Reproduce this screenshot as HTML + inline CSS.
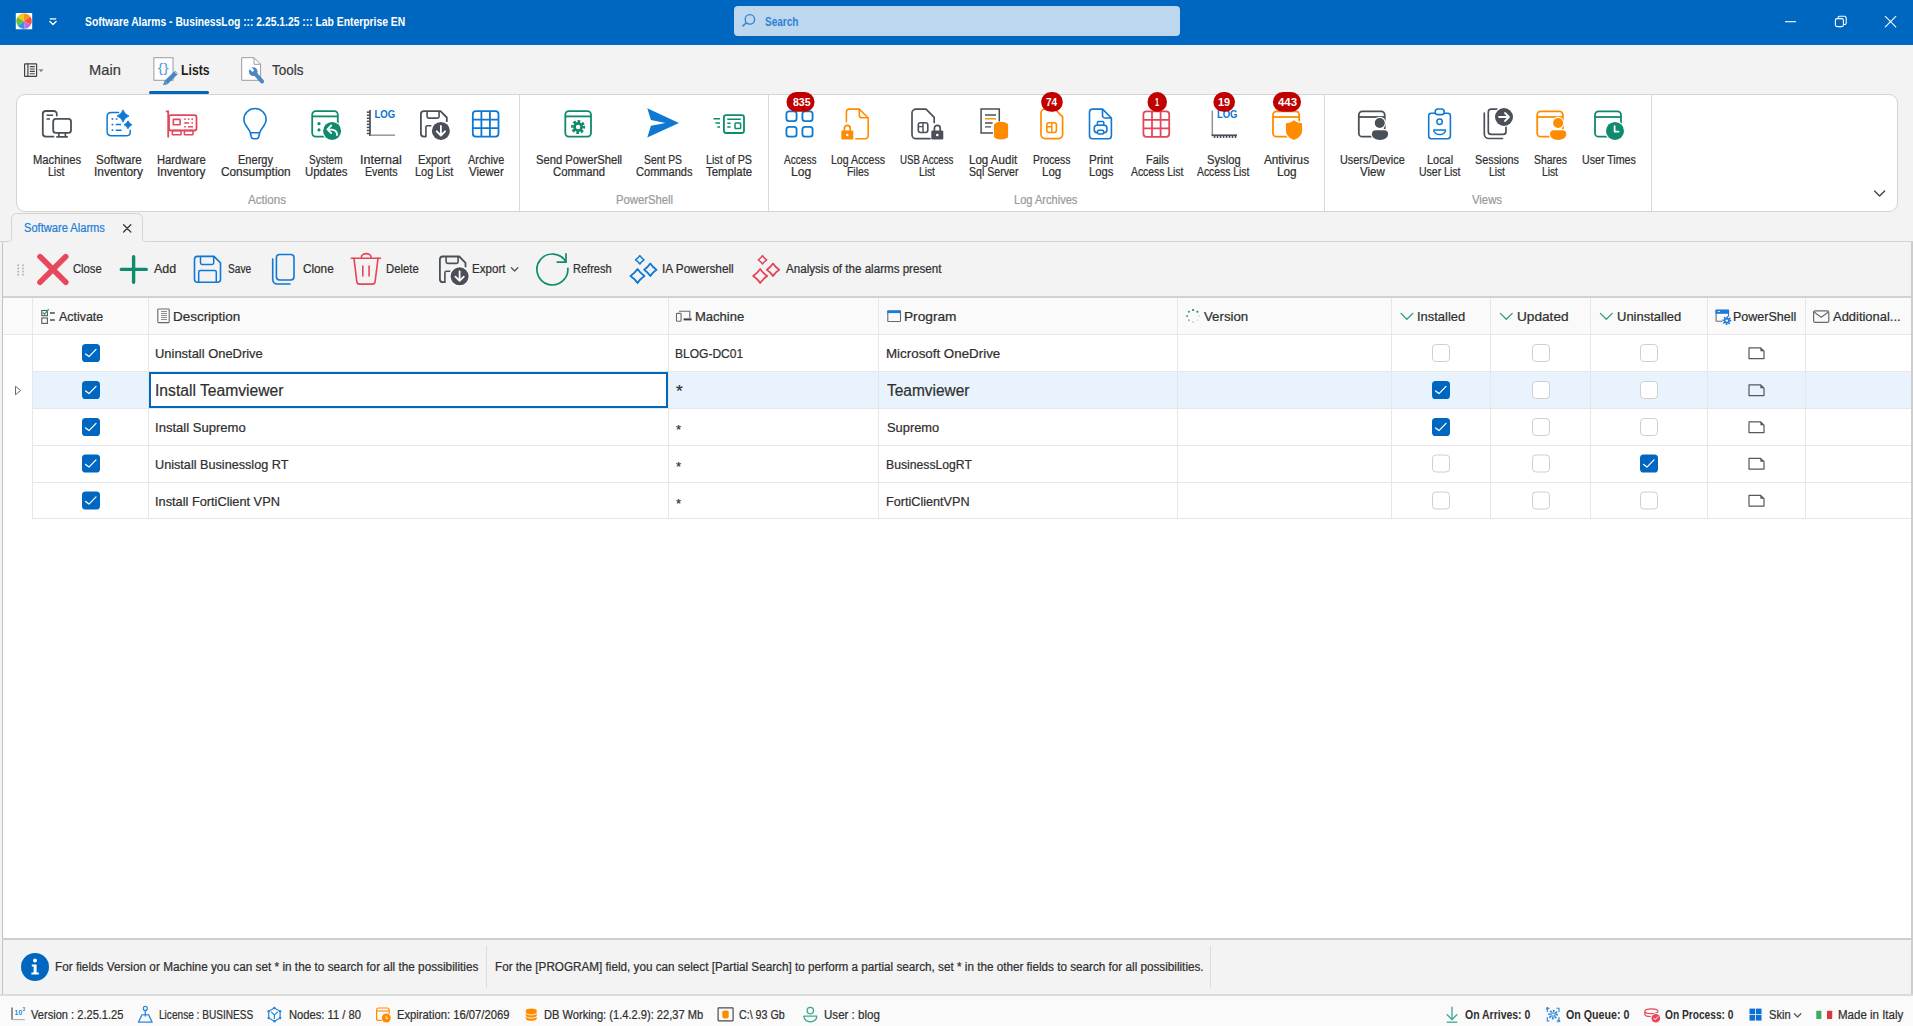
<!DOCTYPE html>
<html><head><meta charset="utf-8"><title>Software Alarms - BusinessLog</title>
<style>
html,body{margin:0;padding:0;background:#f3f3f3;overflow:hidden;font-family:"Liberation Sans",sans-serif}
body{width:1913px;height:1026px;font-family:"Liberation Sans",sans-serif}
#app{position:relative;width:1913px;height:1026px;overflow:hidden;background:#f3f3f3}
#app>*{position:absolute}
.t{-webkit-text-stroke:0.22px currentColor;white-space:pre;transform-origin:0 50%;display:block}
.b{box-sizing:border-box}
svg{overflow:visible}

</style></head>
<body>
<div id="app">
<!-- title bar -->
<div style="left:0;top:0;width:1913px;height:45px;background:#0067c0"></div>
<div style="left:734px;top:6px;width:446px;height:30px;background:#bdd7ee;border-radius:4px"></div>
<!-- tab underline -->
<div style="left:149px;top:91px;width:60px;height:3px;background:#0067c0;border-radius:2px"></div>
<!-- ribbon -->
<div class="b" style="left:16px;top:94px;width:1882px;height:118px;background:#fff;border:1px solid #d4d4d4;border-radius:9px"></div>
<div style="left:519px;top:95px;width:1px;height:116px;background:#d9d9d9"></div>
<div style="left:768px;top:95px;width:1px;height:116px;background:#d9d9d9"></div>
<div style="left:1324px;top:95px;width:1px;height:116px;background:#d9d9d9"></div>
<div style="left:1651px;top:95px;width:1px;height:116px;background:#d9d9d9"></div>
<!-- document area frame -->
<div style="left:2px;top:242px;width:1px;height:752px;background:#c2c2c2"></div>
<!-- toolbar bottom line -->
<div style="left:3px;top:296px;width:1910px;height:2px;background:#d2d2d2"></div>
<!-- grid -->
<div style="left:3px;top:298px;width:1908px;height:640px;background:#fff"></div>
<div style="left:3px;top:298px;width:1908px;height:36px;background:#fafafa"></div>
<div style="left:33px;top:372px;width:1878px;height:36px;background:#e9f3fd"></div>
<!-- horizontal grid lines -->
<div style="left:3px;top:334px;width:1908px;height:1px;background:#e7e7e7"></div>
<div style="left:33px;top:371px;width:1878px;height:1px;background:#e7e7e7"></div>
<div style="left:33px;top:408px;width:1878px;height:1px;background:#e7e7e7"></div>
<div style="left:33px;top:445px;width:1878px;height:1px;background:#e7e7e7"></div>
<div style="left:33px;top:482px;width:1878px;height:1px;background:#e7e7e7"></div>
<div style="left:33px;top:518px;width:1878px;height:1px;background:#e7e7e7"></div>
<!-- vertical grid lines -->
<div style="left:32px;top:298px;width:1px;height:221px;background:#e7e7e7"></div>
<div style="left:148px;top:298px;width:1px;height:221px;background:#e7e7e7"></div>
<div style="left:668px;top:298px;width:1px;height:221px;background:#e7e7e7"></div>
<div style="left:878px;top:298px;width:1px;height:221px;background:#e7e7e7"></div>
<div style="left:1177px;top:298px;width:1px;height:221px;background:#e7e7e7"></div>
<div style="left:1391px;top:298px;width:1px;height:221px;background:#e7e7e7"></div>
<div style="left:1490px;top:298px;width:1px;height:221px;background:#e7e7e7"></div>
<div style="left:1590px;top:298px;width:1px;height:221px;background:#e7e7e7"></div>
<div style="left:1707px;top:298px;width:1px;height:221px;background:#e7e7e7"></div>
<div style="left:1805px;top:298px;width:1px;height:221px;background:#e7e7e7"></div>
<div style="left:1911px;top:242px;width:2px;height:753px;background:#cdcdcd"></div>
<!-- edit box -->
<div class="b" style="left:149px;top:372px;width:519px;height:36px;background:#fff;border:2px solid #0067c0"></div>
<!-- grid bottom / info panel -->
<div style="left:2px;top:938px;width:1911px;height:2px;background:#cdcdcd"></div>
<div style="left:486px;top:946px;width:1px;height:42px;background:#dcdcdc"></div>
<div style="left:1210px;top:946px;width:1px;height:42px;background:#dcdcdc"></div>
<div style="left:0;top:994px;width:1913px;height:2px;background:#dcdcdc"></div>
<div style="left:0;top:996px;width:1913px;height:30px;background:#fafafa"></div>

<svg style="left:0;top:0" width="1913" height="1026" viewBox="0 0 1913 1026">
<path d="M53.5 136.6H45.8a3 3 0 0 1-3-3V114a3 3 0 0 1 3-3H53.8a3 3 0 0 1 3 3V115.6" fill="none" stroke="#4a5058" stroke-width="1.8" stroke-linecap="round" stroke-linejoin="round"/>
<path d="M46.5 115.2H53.2M46.5 119H50" fill="none" stroke="#4a5058" stroke-width="1.6" />
<rect x="53.2" y="118.9" width="17.8" height="14" rx="2.6" fill="none" stroke="#4a5058" stroke-width="1.8" />
<path d="M58.8 133V136.6M65.4 133V136.6M56.3 136.8H67.8" fill="none" stroke="#4a5058" stroke-width="1.7" />
<path d="M118.5 112.4H111.5q-4.4 0-4.4 4.2V131.6q0 4.2 4.4 4.2H126q4.2 0 4.2-3.6V130.2" fill="none" stroke="#0f78d4" stroke-width="1.5" stroke-linecap="round" stroke-linejoin="round"/>
<path d="M123 109.8Q124.6 114.4 129 116Q124.6 117.6 123 122.2Q121.4 117.6 117 116Q121.4 114.4 123 109.8Z" fill="#0f78d4" stroke="#0f78d4" stroke-width="0.8" stroke-linejoin="round"/>
<path d="M128 120.8Q129.2 123.6 132 124.8Q129.2 126 128 128.8Q126.8 126 124 124.8Q126.8 123.6 128 120.8Z" fill="#0f78d4" stroke="#0f78d4" stroke-width="0.8" stroke-linejoin="round"/>
<rect x="111.6" y="118.2" width="1.7" height="1.6" rx="0" fill="#0f78d4" />
<rect x="111.6" y="123.8" width="1.7" height="1.6" rx="0" fill="#0f78d4" />
<rect x="111.6" y="129.39999999999998" width="1.7" height="1.6" rx="0" fill="#0f78d4" />
<path d="M115.8 124.6H121M115.8 130.2H121.6M115.8 119H117.5" fill="none" stroke="#0f78d4" stroke-width="1.5" />
<path d="M165.8 111.4H168.2V137.5" fill="none" stroke="#e3465a" stroke-width="1.8" />
<rect x="169" y="115.2" width="27.5" height="15.3" rx="2" fill="none" stroke="#e3465a" stroke-width="1.8" />
<rect x="172.4" y="130.5" width="8.6" height="4.2" rx="0.5" fill="none" stroke="#e3465a" stroke-width="1.5" />
<rect x="184.4" y="130.5" width="8.6" height="4.2" rx="0.5" fill="none" stroke="#e3465a" stroke-width="1.5" />
<rect x="173.3" y="119.4" width="6.8" height="5.4" rx="0.5" fill="none" stroke="#e3465a" stroke-width="1.6" />
<rect x="184.2" y="118.4" width="1.6" height="1.5" rx="0" fill="#e3465a" />
<rect x="187.8" y="118.4" width="1.6" height="1.5" rx="0" fill="#e3465a" />
<rect x="191.4" y="118.4" width="1.6" height="1.5" rx="0" fill="#e3465a" />
<path d="M184.2 122.9H189M184.2 126.7H185.8M188 126.7H193" fill="none" stroke="#e3465a" stroke-width="1.5" />
<rect x="191.4" y="122.1" width="1.6" height="1.5" rx="0" fill="#e3465a" />
<path d="M250.3 132.8C249.2 128 243.9 125.6 243.9 119.6A11.1 11.1 0 0 1 266.1 119.6C266.1 125.6 260.8 128 259.7 132.8L258.7 137Q258.2 138.7 256.5 138.7H253.5Q251.8 138.7 251.3 137ZM250.3 132.8H259.7" fill="none" stroke="#0f78d4" stroke-width="1.6" stroke-linecap="round" stroke-linejoin="round"/>
<rect x="312.2" y="111.2" width="25.600000000000023" height="25.39999999999999" rx="3.5" fill="none" stroke="#0f8a6c" stroke-width="1.8" />
<path d="M312.2 116.4H337.8" fill="none" stroke="#0f8a6c" stroke-width="1.8" />
<circle cx="319" cy="123.7" r="1.6" fill="#0f8a6c" />
<circle cx="319" cy="129.9" r="1.6" fill="#0f8a6c" />
<circle cx="332.1" cy="130.9" r="9" fill="#0f8a6c" stroke="#ffffff" stroke-width="2.4" paint-order="stroke"/>
<path d="M337 135C337.2 130.6 334.2 129.3 327.6 129.3M331.2 125.5L327.4 129.3L331.2 133.1" fill="none" stroke="#ffffff" stroke-width="1.8" stroke-linecap="round" stroke-linejoin="round"/>
<path d="M370 110V136" fill="none" stroke="#4a5058" stroke-width="1.7" />
<rect x="366.8" y="111.4" width="3.2" height="1.5" rx="0" fill="#4a5058" />
<rect x="366.8" y="114.45" width="3.2" height="1.5" rx="0" fill="#4a5058" />
<rect x="366.8" y="117.5" width="3.2" height="1.5" rx="0" fill="#4a5058" />
<rect x="366.8" y="120.55000000000001" width="3.2" height="1.5" rx="0" fill="#4a5058" />
<rect x="366.8" y="123.60000000000001" width="3.2" height="1.5" rx="0" fill="#4a5058" />
<rect x="366.8" y="126.65" width="3.2" height="1.5" rx="0" fill="#4a5058" />
<rect x="366.8" y="129.7" width="3.2" height="1.5" rx="0" fill="#4a5058" />
<rect x="366.8" y="132.75" width="3.2" height="1.5" rx="0" fill="#4a5058" />
<path d="M370.8 135.2H395" fill="none" stroke="#9a9ea3" stroke-width="1.6" />
<text x="374.5" y="117.6" font-family="Liberation Sans, sans-serif" font-size="10.6" font-weight="700" fill="#0c74d2" textLength="20.8" lengthAdjust="spacingAndGlyphs" >LOG</text>
<path d="M425.7 136.6H423.9a3 3 0 0 1-3-3V114.2a3 3 0 0 1 3-3H440.5L446.8 117.5V121.2" fill="none" stroke="#4a5058" stroke-width="1.8" stroke-linecap="round" stroke-linejoin="round"/>
<path d="M427.09999999999997 111.4V116.5a1.6 1.6 0 0 0 1.6 1.6H437.5a1.6 1.6 0 0 0 1.6-1.6V111.4" fill="none" stroke="#4a5058" stroke-width="1.6" />
<path d="M425.9 136.6V127.3a1.6 1.6 0 0 1 1.6-1.6H431.4" fill="none" stroke="#4a5058" stroke-width="1.6" />
<circle cx="440.9" cy="130.9" r="9" fill="#4a5058" stroke="#ffffff" stroke-width="2.4" paint-order="stroke"/>
<path d="M440.9 125.9V135.3M436.7 131.3L440.9 135.5L445.09999999999997 131.3" fill="none" stroke="#ffffff" stroke-width="1.8" stroke-linecap="round" stroke-linejoin="round"/>
<rect x="472.8" y="111.2" width="25.69999999999999" height="25.39999999999999" rx="3" fill="none" stroke="#0f78d4" stroke-width="1.8" />
<path d="M481.4 111.2V136.6M489.9 111.2V136.6M472.8 119.7H498.5M472.8 128.1H498.5" fill="none" stroke="#0f78d4" stroke-width="1.8" />
<rect x="565.3" y="111.2" width="25.700000000000045" height="25.39999999999999" rx="3.5" fill="none" stroke="#0f8a6c" stroke-width="1.8" />
<path d="M565.3 116.4H591" fill="none" stroke="#0f8a6c" stroke-width="1.8" />
<circle cx="578.1" cy="127" r="5.7" fill="none" stroke="#0f8a6c" stroke-width="2.8" stroke-dasharray="2.57 1.90" transform="rotate(-11 578.1 127)"/>
<circle cx="578.1" cy="127" r="4.9" fill="#0f8a6c" />
<circle cx="578.1" cy="127" r="2.2" fill="#ffffff" />
<path d="M647.3 108.2L679 122.9L647.3 137.6L650.9 125.7L665.5 122.9L650.9 120.1Z" fill="#0f78d4" />
<rect x="723.9" y="115.2" width="20.1" height="17.8" rx="2.2" fill="none" stroke="#0f8a6c" stroke-width="1.8" />
<path d="M713.4 118.8H720M715.4 122.9H720M717.3 127H720" fill="none" stroke="#0f8a6c" stroke-width="1.5" />
<path d="M727.3 119.3H740.7M727.3 123.2H730.6M727.3 127H730.6" fill="none" stroke="#0f8a6c" stroke-width="1.5" />
<rect x="735" y="122.9" width="5.6" height="5.6" rx="0.8" fill="none" stroke="#0f8a6c" stroke-width="1.5" />
<rect x="786.4" y="111.3" width="10.2" height="9.8" rx="2.6" fill="none" stroke="#0f78d4" stroke-width="1.8" />
<rect x="802.4" y="111.3" width="10.2" height="9.8" rx="2.6" fill="none" stroke="#0f78d4" stroke-width="1.8" />
<rect x="786.4" y="126.9" width="10.2" height="9.8" rx="2.6" fill="none" stroke="#0f78d4" stroke-width="1.8" />
<rect x="802.4" y="126.9" width="10.2" height="9.8" rx="2.6" fill="none" stroke="#0f78d4" stroke-width="1.8" />
<path d="M846.4 121.6V112.1a3 3 0 0 1 3-3H859.3L868.2 118V135.7a3 3 0 0 1-3 3H855.8" fill="none" stroke="#ff8c00" stroke-width="1.6" stroke-linecap="round" stroke-linejoin="round"/>
<path d="M859.3 109.3V115.2a2.6 2.6 0 0 0 2.6 2.6H868" fill="none" stroke="#ff8c00" stroke-width="1.6" />
<rect x="841.3" y="130.5" width="12" height="9" rx="1.3" fill="#ff8c00" />
<path d="M844.4 131V128.2a2.9 2.9 0 0 1 5.8 0V131" fill="none" stroke="#ff8c00" stroke-width="1.7" />
<circle cx="847.3" cy="135" r="1.35" fill="#ffffff" />
<path d="M930 138.7H916a4 4 0 0 1-4-4V113.1a4 4 0 0 1 4-4H926L934.2 117.4V122.4" fill="none" stroke="#4a5058" stroke-width="1.7" stroke-linecap="round" stroke-linejoin="round"/>
<rect x="918.3" y="122.8" width="9.5" height="9.7" rx="2.2" fill="none" stroke="#4a5058" stroke-width="1.6" />
<path d="M918.3 126.6H923M923 122.8V132.5" fill="none" stroke="#4a5058" stroke-width="1.4" />
<rect x="931.3" y="130.5" width="12" height="9" rx="1.3" fill="#4a5058" />
<path d="M934.4 131V128.2a2.9 2.9 0 0 1 5.8 0V131" fill="none" stroke="#4a5058" stroke-width="1.7" />
<circle cx="937.3" cy="135" r="1.35" fill="#ffffff" />
<path d="M993 133H981.1V109H999.3V121.4" fill="none" stroke="#4a5058" stroke-width="1.5" />
<path d="M985 115H996M985 123H992.6M985 126.8H991" fill="none" stroke="#4a5058" stroke-width="1.3" />
<path d="M985 118.8H996" fill="none" stroke="#ff8c00" stroke-width="1.4" />
<path d="M994 124.8a7.05 3 0 0 1 14.1 0V136.5a7.05 3 0 0 1-14.1 0Z" fill="#ff8c00" />
<path d="M1045 109.1H1055L1062.6 116.8V134.6a4 4 0 0 1-4 4H1045a4 4 0 0 1-4-4V113.1a4 4 0 0 1 4-4Z" fill="none" stroke="#ff8c00" stroke-width="1.7" stroke-linecap="round" stroke-linejoin="round"/>
<rect x="1046.8" y="122.8" width="9.6" height="9.7" rx="2.2" fill="none" stroke="#ff8c00" stroke-width="1.6" />
<path d="M1046.8 126.8H1051.8M1051.8 122.8V132.5" fill="none" stroke="#ff8c00" stroke-width="1.4" />
<path d="M1092.5 109.1H1102.5L1111.4 118V135.7a3 3 0 0 1-3 3H1092.5a3 3 0 0 1-3-3V112.1a3 3 0 0 1 3-3Z" fill="none" stroke="#0f78d4" stroke-width="1.6" stroke-linecap="round" stroke-linejoin="round"/>
<path d="M1102.5 109.3V115.4a2.6 2.6 0 0 0 2.6 2.6H1111.2" fill="none" stroke="#0f78d4" stroke-width="1.6" />
<rect x="1097.4" y="121.6" width="6.4" height="4" rx="1" fill="none" stroke="#0f78d4" stroke-width="1.5" />
<rect x="1094.3" y="125.2" width="12.6" height="7.4" rx="2.6" fill="#ffffff" stroke="#0f78d4" stroke-width="1.6" />
<rect x="1097.6" y="130.2" width="6" height="3.8" rx="1" fill="#ffffff" stroke="#0f78d4" stroke-width="1.5" />
<rect x="1143.4" y="111.4" width="25.799999999999955" height="25.400000000000006" rx="3" fill="none" stroke="#e3465a" stroke-width="1.8" />
<path d="M1152.0 111.4V136.8M1160.6 111.4V136.8M1143.4 119.9H1169.2M1143.4 128.3H1169.2" fill="none" stroke="#e3465a" stroke-width="1.8" />
<path d="M1212.3 110.5V135" fill="none" stroke="#8f9399" stroke-width="1.5" />
<path d="M1211.5 135.3H1237" fill="none" stroke="#4a5058" stroke-width="1.8" />
<rect x="1213.8" y="136" width="1.5" height="2" rx="0" fill="#4a5058" />
<rect x="1216.8" y="136" width="1.5" height="2" rx="0" fill="#4a5058" />
<rect x="1219.8" y="136" width="1.5" height="2" rx="0" fill="#4a5058" />
<rect x="1222.8" y="136" width="1.5" height="2" rx="0" fill="#4a5058" />
<rect x="1225.8" y="136" width="1.5" height="2" rx="0" fill="#4a5058" />
<rect x="1228.8" y="136" width="1.5" height="2" rx="0" fill="#4a5058" />
<rect x="1231.8" y="136" width="1.5" height="2" rx="0" fill="#4a5058" />
<rect x="1234.8" y="136" width="1.5" height="2" rx="0" fill="#4a5058" />
<text x="1216.9" y="117.8" font-family="Liberation Sans, sans-serif" font-size="10.6" font-weight="700" fill="#0c74d2" textLength="20.6" lengthAdjust="spacingAndGlyphs" >LOG</text>
<rect x="1273" y="111.4" width="26.200000000000045" height="25.299999999999983" rx="3.5" fill="none" stroke="#ff8c00" stroke-width="1.8" />
<path d="M1273 117H1299.2" fill="none" stroke="#ff8c00" stroke-width="1.8" />
<path d="M1294 120.3C1296.5 122.3 1299 123 1302.1 123.2V130.5C1302.1 135.5 1298 138.5 1294 139.9C1290 138.5 1285.9 135.5 1285.9 130.5V123.2C1289 123 1291.5 122.3 1294 120.3Z" fill="#ff8c00" stroke="#ffffff" stroke-width="2.4" paint-order="stroke"/>
<rect x="1358.8" y="111.4" width="25.90000000000009" height="25.299999999999983" rx="3.5" fill="none" stroke="#4a5058" stroke-width="1.8" />
<path d="M1358.8 117H1384.7" fill="none" stroke="#4a5058" stroke-width="1.8" />
<circle cx="1379.75" cy="123" r="5" fill="#4a5058" stroke="#ffffff" stroke-width="2.4" paint-order="stroke"/>
<path d="M1371.9 134.10000000000002a3.8 3.8 0 0 1 3.8 -3.8H1384.3a3.8 3.8 0 0 1 3.8 3.8C1388.1 137.9 1384.5 139.9 1380.0 139.9C1375.5 139.9 1371.9 137.9 1371.9 134.10000000000002Z" fill="#4a5058" stroke="#ffffff" stroke-width="2.4" paint-order="stroke"/>
<rect x="1428.7" y="113.2" width="21.7" height="25.5" rx="2.6" fill="none" stroke="#0f78d4" stroke-width="1.6" />
<rect x="1435.2" y="109" width="9" height="5.6" rx="2.7" fill="#ffffff" stroke="#0f78d4" stroke-width="1.6" />
<circle cx="1439.6" cy="121.8" r="2.7" fill="none" stroke="#0f78d4" stroke-width="1.5" />
<path d="M1433.8 130H1445.6a5.9 4.6 0 0 1-11.8 0Z" fill="none" stroke="#0f78d4" stroke-width="1.5" stroke-linecap="round" stroke-linejoin="round"/>
<path d="M1497 109.1H1491.3a3 3 0 0 0-3 3V131.4a3 3 0 0 0 3 3H1503a3 3 0 0 0 3-3V126" fill="none" stroke="#4a5058" stroke-width="1.7" stroke-linecap="round" stroke-linejoin="round"/>
<path d="M1484.3 113V134a4.5 4.5 0 0 0 4.5 4.5H1502.5" fill="none" stroke="#4a5058" stroke-width="1.7" stroke-linecap="round" stroke-linejoin="round"/>
<circle cx="1504" cy="117" r="9" fill="#4a5058" stroke="#ffffff" stroke-width="2.4" paint-order="stroke"/>
<path d="M1499 117H1508.6M1505 113L1509 117L1505 121" fill="none" stroke="#ffffff" stroke-width="1.8" stroke-linecap="round" stroke-linejoin="round"/>
<rect x="1537.2" y="111.4" width="25.700000000000045" height="25.299999999999983" rx="3.5" fill="none" stroke="#ff8c00" stroke-width="1.8" />
<path d="M1537.2 117H1562.9" fill="none" stroke="#ff8c00" stroke-width="1.8" />
<circle cx="1558.1" cy="123" r="5" fill="#ff8c00" stroke="#ffffff" stroke-width="2.4" paint-order="stroke"/>
<path d="M1550 134.10000000000002a3.8 3.8 0 0 1 3.8 -3.8H1562.5a3.8 3.8 0 0 1 3.8 3.8C1566.3 137.9 1562.7 139.9 1558.15 139.9C1553.6 139.9 1550 137.9 1550 134.10000000000002Z" fill="#ff8c00" stroke="#ffffff" stroke-width="2.4" paint-order="stroke"/>
<rect x="1595" y="111.4" width="26" height="25.299999999999983" rx="3.5" fill="none" stroke="#0f8a6c" stroke-width="1.8" />
<path d="M1595 117H1621" fill="none" stroke="#0f8a6c" stroke-width="1.8" />
<circle cx="1615" cy="130.9" r="9" fill="#0f8a6c" stroke="#ffffff" stroke-width="2.4" paint-order="stroke"/>
<path d="M1614.6 126.2V131.6H1618.6" fill="none" stroke="#ffffff" stroke-width="1.8" stroke-linecap="round" stroke-linejoin="round"/>
<rect x="786.5" y="92" width="28.0" height="19.8" rx="9.9" fill="#c00000" />
<rect x="1041.1" y="92" width="21.700000000000045" height="19.8" rx="9.9" fill="#c00000" />
<rect x="1147.5" y="92" width="19.5" height="19.8" rx="9.9" fill="#c00000" />
<rect x="1213.4" y="92" width="21.59999999999991" height="19.8" rx="9.9" fill="#c00000" />
<rect x="1272.9" y="92" width="28.09999999999991" height="19.8" rx="9.9" fill="#c00000" />
<path d="M1874.6 191L1879.6 196L1884.6 191" fill="none" stroke="#444" stroke-width="1.4" stroke-linecap="round" stroke-linejoin="round"/>
<rect x="15.8" y="13.1" width="16.4" height="16.2" rx="0.5" fill="#ffffff" />
<path d="M24 21.2L17.33 17.35A7.7 7.7 0 0 1 23.33 13.53Z" fill="#f6c915" />
<path d="M24 21.2L23.33 13.53A7.7 7.7 0 0 1 30.31 16.78Z" fill="#ff9518" />
<path d="M24 21.2L30.31 16.78A7.7 7.7 0 0 1 30.98 24.45Z" fill="#fb4b3e" />
<path d="M24 21.2L30.98 24.45A7.7 7.7 0 0 1 24.67 28.87Z" fill="#c56bd6" />
<path d="M24 21.2L24.67 28.87A7.7 7.7 0 0 1 17.69 25.62Z" fill="#3d8fe8" />
<path d="M24 21.2L17.69 25.62A7.7 7.7 0 0 1 17.33 17.35Z" fill="#63c132" />
<path d="M49.8 18.9H56.2" fill="none" stroke="#ffffff" stroke-width="1.3" />
<path d="M49.9 21.6L53 24.6L56.1 21.6" fill="none" stroke="#ffffff" stroke-width="1.4" stroke-linecap="round" stroke-linejoin="round"/>
<circle cx="749.9" cy="19.4" r="4.7" fill="none" stroke="#2f82d4" stroke-width="1.3" />
<path d="M746.5 22.8L742.9 25.9" fill="none" stroke="#2f82d4" stroke-width="1.5" stroke-linecap="round" stroke-linejoin="round"/>
<path d="M1785 21.7H1796" fill="none" stroke="#ffffff" stroke-width="1.1" />
<rect x="1835.4" y="18.6" width="8" height="8" rx="1.6" fill="none" stroke="#ffffff" stroke-width="1.1" />
<path d="M1838 18.4V17.9a1.6 1.6 0 0 1 1.6-1.6H1844.6a1.6 1.6 0 0 1 1.6 1.6V22.9a1.6 1.6 0 0 1-1.6 1.6H1843.6" fill="none" stroke="#ffffff" stroke-width="1.1" />
<path d="M1885.3 16.4L1895.8 26.9M1895.8 16.4L1885.3 26.9" fill="none" stroke="#ffffff" stroke-width="1.1" stroke-linecap="round" stroke-linejoin="round"/>
<rect x="24.6" y="63.8" width="12" height="12.6" rx="0.5" fill="none" stroke="#444" stroke-width="1.2" />
<path d="M27.9 63.8V76.4" fill="none" stroke="#444" stroke-width="1.2" />
<path d="M29.8 66.6H34.8M29.8 69H34.8M29.8 71.4H34.8M29.8 73.8H34.8" fill="none" stroke="#444" stroke-width="1.1" />
<path d="M38.4 69.2H43.6L41 72.2Z" fill="#8a8a8a" />
<rect x="153.9" y="57.7" width="19.1" height="22.6" rx="0" fill="#ffffff" stroke="#9c9c9c" stroke-width="1" />
<text x="157.8" y="71.8" font-family="Liberation Sans, sans-serif" font-size="13.5" font-weight="400" fill="#5b9bd5" textLength="11" lengthAdjust="spacingAndGlyphs" >{}</text>
<path d="M176.4 72.4L166 82.6" fill="none" stroke="#4a86c5" stroke-width="4.4" />
<path d="M163.2 85.2L164.2 81L167.4 84.2Z" fill="#4a86c5" />
<path d="M174.3 71.4L177.4 74.5" fill="none" stroke="#dfe9f5" stroke-width="0.8" />
<path d="M241.7 57.7H254L260.6 64.3V80.3H241.7Z" fill="#ffffff" stroke="#9c9c9c" stroke-width="1" />
<path d="M254 57.7V64.3H260.6" fill="none" stroke="#9c9c9c" stroke-width="1" />
<path d="M255 73.6L262 81.4" fill="none" stroke="#4a86c5" stroke-width="4" stroke-linecap="round" stroke-linejoin="round"/>
<circle cx="253.2" cy="71.6" r="4.3" fill="#4a86c5" />
<path d="M253.4 71.2L249.6 67.4" fill="none" stroke="#ffffff" stroke-width="2.6" />
<path d="M0 241.5H8.5Q11.5 241.5 11.5 238.5V219.5Q11.5 213.5 17.5 213.5H136.5Q142.5 213.5 142.5 219.5V238.5Q142.5 241.5 145.5 241.5H1913" fill="none" stroke="#d4d4d4" stroke-width="1" />
<path d="M123.6 224.8L130.8 232M130.8 224.8L123.6 232" fill="none" stroke="#3a3a3a" stroke-width="1.3" stroke-linecap="round" stroke-linejoin="round"/>
<rect x="17.4" y="264.5" width="1.7" height="1.7" rx="0" fill="#b4b4b4" />
<rect x="17.4" y="267.59999999999997" width="1.7" height="1.7" rx="0" fill="#b4b4b4" />
<rect x="17.4" y="270.7" width="1.7" height="1.7" rx="0" fill="#b4b4b4" />
<rect x="17.4" y="273.8" width="1.7" height="1.7" rx="0" fill="#b4b4b4" />
<rect x="22.099999999999998" y="264.5" width="1.7" height="1.7" rx="0" fill="#b4b4b4" />
<rect x="22.099999999999998" y="267.59999999999997" width="1.7" height="1.7" rx="0" fill="#b4b4b4" />
<rect x="22.099999999999998" y="270.7" width="1.7" height="1.7" rx="0" fill="#b4b4b4" />
<rect x="22.099999999999998" y="273.8" width="1.7" height="1.7" rx="0" fill="#b4b4b4" />
<path d="M40 256.6L65.8 282.2M65.8 256.6L40 282.2" fill="none" stroke="#e8485c" stroke-width="5.6" stroke-linecap="round" stroke-linejoin="round"/>
<path d="M121.3 269.4H146.3M133.6 256.7V282.2" fill="none" stroke="#0f8a6c" stroke-width="3.4" stroke-linecap="round" stroke-linejoin="round"/>
<path d="M197.5 256.4H214.0L220.5 262.9V279.3a3 3 0 0 1-3 3H197.5a3 3 0 0 1-3-3V259.4a3 3 0 0 1 3-3Z" fill="none" stroke="#0f78d4" stroke-width="1.6" stroke-linecap="round" stroke-linejoin="round"/>
<path d="M200.5 256.4V262.79999999999995a1.6 1.6 0 0 0 1.6 1.6H212.1a1.6 1.6 0 0 0 1.6-1.6V256.4" fill="none" stroke="#0f78d4" stroke-width="1.5" />
<path d="M198.7 282.3V272.1a1.6 1.6 0 0 1 1.6-1.6H214.7a1.6 1.6 0 0 1 1.6 1.6V282.3" fill="none" stroke="#0f78d4" stroke-width="1.5" />
<rect x="276.4" y="254.5" width="17.6" height="25.5" rx="3.2" fill="none" stroke="#0f78d4" stroke-width="1.6" />
<path d="M272.7 259V279.6a4.4 4.4 0 0 0 4.4 4.4H290" fill="none" stroke="#0f78d4" stroke-width="1.6" stroke-linecap="round" stroke-linejoin="round"/>
<path d="M351.3 258.2H380.6" fill="none" stroke="#e3465a" stroke-width="1.6" stroke-linecap="round" stroke-linejoin="round"/>
<path d="M361.4 258V257a4.8 3.4 0 0 1 9.6 0V258" fill="none" stroke="#e3465a" stroke-width="1.6" />
<path d="M354 258.4L356.8 281.6a2.8 2.8 0 0 0 2.8 2.5H372.3a2.8 2.8 0 0 0 2.8-2.5L378 258.4" fill="none" stroke="#e3465a" stroke-width="1.6" stroke-linecap="round" stroke-linejoin="round"/>
<path d="M362.8 265.4V276.6M369.1 265.4V276.6" fill="none" stroke="#e3465a" stroke-width="1.6" />
<path d="M444.7 282.2H442.9a3 3 0 0 1-3-3V259.5a3 3 0 0 1 3-3H459.2L465.5 262.8V266.5" fill="none" stroke="#4a5058" stroke-width="1.8" stroke-linecap="round" stroke-linejoin="round"/>
<path d="M446.09999999999997 256.7V261.8a1.6 1.6 0 0 0 1.6 1.6H456.5a1.6 1.6 0 0 0 1.6-1.6V256.7" fill="none" stroke="#4a5058" stroke-width="1.6" />
<path d="M444.9 282.2V272.9a1.6 1.6 0 0 1 1.6-1.6H450.4" fill="none" stroke="#4a5058" stroke-width="1.6" />
<circle cx="459.6" cy="276.3" r="9" fill="#4a5058" stroke="#ffffff" stroke-width="2.4" paint-order="stroke"/>
<path d="M459.6 271.3V280.7M455.40000000000003 276.7L459.6 280.90000000000003L463.8 276.7" fill="none" stroke="#ffffff" stroke-width="1.8" stroke-linecap="round" stroke-linejoin="round"/>
<path d="M511.4 267.8L514.6 271L517.8 267.8" fill="none" stroke="#555" stroke-width="1.3" stroke-linecap="round" stroke-linejoin="round"/>
<path d="M567.75 267.6A15.45 15.45 0 1 1 566 262.1" fill="none" stroke="#0f8a6c" stroke-width="1.7" stroke-linecap="butt"/>
<path d="M566 253.3V262.1H556.6" fill="none" stroke="#0f8a6c" stroke-width="1.7" stroke-linejoin="miter" stroke-linecap="butt"/>
<path d="M639.8 255.60000000000002Q641.48 258.12 644.0 259.8Q641.48 261.48 639.8 264.0Q638.12 261.48 635.5999999999999 259.8Q638.12 258.12 639.8 255.60000000000002Z" fill="none" stroke="#0f78d4" stroke-width="1.5" stroke-linejoin="round"/>
<path d="M650.3 263.6Q652.78 267.32 656.5 269.8Q652.78 272.28 650.3 276.0Q647.82 272.28 644.0999999999999 269.8Q647.82 267.32 650.3 263.6Z" fill="none" stroke="#0f78d4" stroke-width="1.8" stroke-linejoin="round"/>
<path d="M637.5 269.1Q640.30 273.30 644.5 276.1Q640.30 278.90 637.5 283.1Q634.70 278.90 630.5 276.1Q634.70 273.30 637.5 269.1Z" fill="none" stroke="#0f78d4" stroke-width="1.8" stroke-linejoin="round"/>
<path d="M762.5 255.60000000000002Q764.18 258.12 766.7 259.8Q764.18 261.48 762.5 264.0Q760.82 261.48 758.3 259.8Q760.82 258.12 762.5 255.60000000000002Z" fill="none" stroke="#e3465a" stroke-width="1.5" stroke-linejoin="round"/>
<path d="M773.0 263.6Q775.48 267.32 779.2 269.8Q775.48 272.28 773.0 276.0Q770.52 272.28 766.8 269.8Q770.52 267.32 773.0 263.6Z" fill="none" stroke="#e3465a" stroke-width="1.8" stroke-linejoin="round"/>
<path d="M760.2 269.1Q763.00 273.30 767.2 276.1Q763.00 278.90 760.2 283.1Q757.40 278.90 753.2 276.1Q757.40 273.30 760.2 269.1Z" fill="none" stroke="#e3465a" stroke-width="1.8" stroke-linejoin="round"/>
<rect x="41.8" y="310.5" width="5.6" height="5.2" rx="0" fill="none" stroke="#5a5a5a" stroke-width="1.1" />
<rect x="41.8" y="318" width="5.6" height="5.4" rx="0" fill="none" stroke="#5a5a5a" stroke-width="1.1" />
<path d="M43 312.6L44.6 314.2L48.4 309.6" fill="none" stroke="#2aa37f" stroke-width="1.3" stroke-linecap="round" stroke-linejoin="round"/>
<path d="M50 313H54.8M50 320H54.8" fill="none" stroke="#4a4a4a" stroke-width="1.5" />
<rect x="157.8" y="309" width="11.4" height="13.6" rx="0.8" fill="none" stroke="#666a70" stroke-width="1.1" />
<path d="M160.5 311.5H166.5M160.5 313.5H166.5M160.5 315.5H166.5M160.5 317.5H166.5M160.5 319.5H166.5" fill="none" stroke="#8c8c8c" stroke-width="1" shape-rendering="crispEdges"/>
<rect x="676.5" y="313.4" width="4.6" height="7.8" rx="0.8" fill="none" stroke="#666a70" stroke-width="1.1" />
<path d="M679 311.2H689.8V318" fill="none" stroke="#666a70" stroke-width="1.1" />
<path d="M683.6 319.4H691.6" fill="none" stroke="#3c3f44" stroke-width="2" />
<rect x="887.8" y="311" width="12.7" height="10.5" rx="0.5" fill="none" stroke="#666a70" stroke-width="1.1" />
<rect x="887.3" y="310.4" width="13.7" height="2.7" rx="0" fill="#1a7ae0" />
<circle cx="1193.1" cy="310.0" r="1.1" fill="#0f8a6c" opacity="1"/>
<circle cx="1197.34" cy="311.76" r="1.1" fill="#0f8a6c" opacity="0.95"/>
<circle cx="1199.1" cy="316.0" r="0.7" fill="#0f8a6c" opacity="0.35"/>
<circle cx="1197.34" cy="320.24" r="0.7" fill="#0f8a6c" opacity="0.25"/>
<circle cx="1193.1" cy="322.0" r="0.8" fill="#0f8a6c" opacity="0.45"/>
<circle cx="1188.86" cy="320.24" r="0.9" fill="#0f8a6c" opacity="0.6"/>
<circle cx="1187.1" cy="316.0" r="1.0" fill="#0f8a6c" opacity="0.8"/>
<circle cx="1188.86" cy="311.76" r="1.0" fill="#0f8a6c" opacity="0.9"/>
<path d="M1401 313.4L1406.9 319.2L1412.8 313.4" fill="none" stroke="#2a9d85" stroke-width="1.3" stroke-linecap="round" stroke-linejoin="round"/>
<path d="M1500.4 313.4L1506.3000000000002 319.2L1512.2 313.4" fill="none" stroke="#2a9d85" stroke-width="1.3" stroke-linecap="round" stroke-linejoin="round"/>
<path d="M1600.4 313.4L1606.3000000000002 319.2L1612.2 313.4" fill="none" stroke="#2a9d85" stroke-width="1.3" stroke-linecap="round" stroke-linejoin="round"/>
<rect x="1716.1" y="310.2" width="12.4" height="11" rx="0.5" fill="none" stroke="#666a70" stroke-width="1.1" />
<rect x="1715.5" y="309.6" width="13.6" height="4.2" rx="0" fill="#1a7ae0" />
<path d="M1717.8 311.5H1720" fill="none" stroke="#ffffff" stroke-width="0.8" />
<circle cx="1726.8" cy="320.6" r="4.4" fill="#fafafa" />
<circle cx="1726.8" cy="320.6" r="3.3" fill="none" stroke="#1a7ae0" stroke-width="2.2" stroke-dasharray="1.49 1.10" transform="rotate(-11 1726.8 320.6)"/>
<circle cx="1726.8" cy="320.6" r="2.8" fill="#1a7ae0" />
<circle cx="1726.8" cy="320.6" r="1.2" fill="#ffffff" />
<rect x="1813.6" y="310.8" width="15.2" height="11.6" rx="1.6" fill="none" stroke="#666a70" stroke-width="1.2" />
<path d="M1814 312L1821.2 317.2L1828.4 312" fill="none" stroke="#666a70" stroke-width="1.1" stroke-linecap="round" stroke-linejoin="round"/>
<path d="M15.5 386.3L20.6 390.5L15.5 394.7Z" fill="none" stroke="#6a6a6a" stroke-width="1" />
<rect x="82" y="344" width="18" height="18" rx="3.6" fill="#0067c0" />
<path d="M85.6 354L89 356.6L96 349.4" fill="none" stroke="#ffffff" stroke-width="1.3" stroke-linecap="round" stroke-linejoin="round"/>
<rect x="1432.5" y="344.5" width="17" height="17" rx="3.4" fill="#ffffff" stroke="#cfcfcf" stroke-width="1" />
<rect x="1532.5" y="344.5" width="17" height="17" rx="3.4" fill="#ffffff" stroke="#cfcfcf" stroke-width="1" />
<rect x="1640.5" y="344.5" width="17" height="17" rx="3.4" fill="#ffffff" stroke="#cfcfcf" stroke-width="1" />
<path d="M1749 347.8H1760.4L1764 351.2V358.6H1749Z" fill="none" stroke="#54585e" stroke-width="1.2" stroke-linejoin="round"/>
<path d="M1760.4 347.8V351.2H1764Z" fill="#54585e" />
<rect x="82" y="381" width="18" height="18" rx="3.6" fill="#0067c0" />
<path d="M85.6 391L89 393.6L96 386.4" fill="none" stroke="#ffffff" stroke-width="1.3" stroke-linecap="round" stroke-linejoin="round"/>
<rect x="1432" y="381" width="18" height="18" rx="3.6" fill="#0067c0" />
<path d="M1435.6 391L1439 393.6L1446 386.4" fill="none" stroke="#ffffff" stroke-width="1.3" stroke-linecap="round" stroke-linejoin="round"/>
<rect x="1532.5" y="381.5" width="17" height="17" rx="3.4" fill="#ffffff" stroke="#cfcfcf" stroke-width="1" />
<rect x="1640.5" y="381.5" width="17" height="17" rx="3.4" fill="#ffffff" stroke="#cfcfcf" stroke-width="1" />
<path d="M1749 384.8H1760.4L1764 388.2V395.6H1749Z" fill="none" stroke="#54585e" stroke-width="1.2" stroke-linejoin="round"/>
<path d="M1760.4 384.8V388.2H1764Z" fill="#54585e" />
<rect x="82" y="418" width="18" height="18" rx="3.6" fill="#0067c0" />
<path d="M85.6 428L89 430.6L96 423.4" fill="none" stroke="#ffffff" stroke-width="1.3" stroke-linecap="round" stroke-linejoin="round"/>
<rect x="1432" y="418" width="18" height="18" rx="3.6" fill="#0067c0" />
<path d="M1435.6 428L1439 430.6L1446 423.4" fill="none" stroke="#ffffff" stroke-width="1.3" stroke-linecap="round" stroke-linejoin="round"/>
<rect x="1532.5" y="418.5" width="17" height="17" rx="3.4" fill="#ffffff" stroke="#cfcfcf" stroke-width="1" />
<rect x="1640.5" y="418.5" width="17" height="17" rx="3.4" fill="#ffffff" stroke="#cfcfcf" stroke-width="1" />
<path d="M1749 421.8H1760.4L1764 425.2V432.6H1749Z" fill="none" stroke="#54585e" stroke-width="1.2" stroke-linejoin="round"/>
<path d="M1760.4 421.8V425.2H1764Z" fill="#54585e" />
<rect x="82" y="454.5" width="18" height="18" rx="3.6" fill="#0067c0" />
<path d="M85.6 464.5L89 467.1L96 459.9" fill="none" stroke="#ffffff" stroke-width="1.3" stroke-linecap="round" stroke-linejoin="round"/>
<rect x="1432.5" y="455.0" width="17" height="17" rx="3.4" fill="#ffffff" stroke="#cfcfcf" stroke-width="1" />
<rect x="1532.5" y="455.0" width="17" height="17" rx="3.4" fill="#ffffff" stroke="#cfcfcf" stroke-width="1" />
<rect x="1640" y="454.5" width="18" height="18" rx="3.6" fill="#0067c0" />
<path d="M1643.6 464.5L1647 467.1L1654 459.9" fill="none" stroke="#ffffff" stroke-width="1.3" stroke-linecap="round" stroke-linejoin="round"/>
<path d="M1749 458.3H1760.4L1764 461.7V469.1H1749Z" fill="none" stroke="#54585e" stroke-width="1.2" stroke-linejoin="round"/>
<path d="M1760.4 458.3V461.7H1764Z" fill="#54585e" />
<rect x="82" y="491.5" width="18" height="18" rx="3.6" fill="#0067c0" />
<path d="M85.6 501.5L89 504.1L96 496.9" fill="none" stroke="#ffffff" stroke-width="1.3" stroke-linecap="round" stroke-linejoin="round"/>
<rect x="1432.5" y="492.0" width="17" height="17" rx="3.4" fill="#ffffff" stroke="#cfcfcf" stroke-width="1" />
<rect x="1532.5" y="492.0" width="17" height="17" rx="3.4" fill="#ffffff" stroke="#cfcfcf" stroke-width="1" />
<rect x="1640.5" y="492.0" width="17" height="17" rx="3.4" fill="#ffffff" stroke="#cfcfcf" stroke-width="1" />
<path d="M1749 495.3H1760.4L1764 498.7V506.1H1749Z" fill="none" stroke="#54585e" stroke-width="1.2" stroke-linejoin="round"/>
<path d="M1760.4 495.3V498.7H1764Z" fill="#54585e" />
<circle cx="35" cy="967" r="14" fill="#0067c0" />
<circle cx="35" cy="960.4" r="2" fill="#ffffff" />
<path d="M31.8 964.6H36.6V972.6H38.8V974.4H31.4V972.6H33.6V966.4H31.8Z" fill="#ffffff" />
<path d="M12 1007.5V1019.8" fill="none" stroke="#4a4a4a" stroke-width="1.2" />
<path d="M12.4 1019.6H24.8" fill="none" stroke="#b0b0b0" stroke-width="1.1" />
<text x="14.6" y="1015" font-family="Liberation Sans, sans-serif" font-size="7.6" font-weight="700" fill="#2b88d8" textLength="7.6" lengthAdjust="spacingAndGlyphs" >10</text>
<text x="22.4" y="1011.4" font-family="Liberation Sans, sans-serif" font-size="4.6" font-weight="700" fill="#2b88d8" >3</text>
<circle cx="145.3" cy="1008.4" r="2" fill="none" stroke="#2b88d8" stroke-width="1.2" />
<path d="M145.3 1010.4V1016.4" fill="none" stroke="#2b88d8" stroke-width="1.3" />
<path d="M142 1014.8L138.4 1022.2H152.2L148.6 1014.8" fill="none" stroke="#2b88d8" stroke-width="1.3" stroke-linecap="round" stroke-linejoin="round"/>
<path d="M142.4 1014.8H148.2" fill="none" stroke="#2b88d8" stroke-width="1.2" />
<path d="M274.4 1008.0L280.1 1011.3L280.1 1017.9L274.4 1021.2L268.7 1017.9L268.7 1011.3Z" fill="none" stroke="#2b88d8" stroke-width="1.2" />
<circle cx="274.4" cy="1008.0" r="1.25" fill="#2b88d8" />
<circle cx="280.1" cy="1011.3" r="1.25" fill="#2b88d8" />
<circle cx="280.1" cy="1017.9" r="1.25" fill="#2b88d8" />
<circle cx="274.4" cy="1021.2" r="1.25" fill="#2b88d8" />
<circle cx="268.7" cy="1017.9" r="1.25" fill="#2b88d8" />
<circle cx="268.7" cy="1011.3" r="1.25" fill="#2b88d8" />
<path d="M271.4 1012.2L274.4 1015.2L277.4 1012.2M274.4 1015.2V1018.6" fill="none" stroke="#2b88d8" stroke-width="1.2" stroke-linecap="round" stroke-linejoin="round"/>
<rect x="376.6" y="1008" width="12.6" height="12.4" rx="2" fill="none" stroke="#ff8c00" stroke-width="1.2" />
<path d="M376.6 1011H389.2" fill="none" stroke="#ff8c00" stroke-width="1.1" />
<circle cx="386.3" cy="1018" r="4.5" fill="#ff8c00" stroke="#fafafa" stroke-width="1.4" paint-order="stroke"/>
<path d="M386.1 1015.8V1018.3H388" fill="none" stroke="#ffffff" stroke-width="0.9" />
<path d="M525.8 1010.6a5.45 2.1 0 0 1 10.9 0V1018.7a5.45 2.1 0 0 1-10.9 0Z" fill="#ff8c00" />
<path d="M525.8 1012.8a5.45 2.1 0 0 0 10.9 0M525.8 1016a5.45 2.1 0 0 0 10.9 0" fill="none" stroke="#fafafa" stroke-width="0.9" />
<rect x="718.1" y="1007.9" width="15" height="12.9" rx="0.5" fill="none" stroke="#4a4a4a" stroke-width="1.2" />
<rect x="722.3" y="1010.4" width="6.4" height="8" rx="1.8" fill="#ff8c00" />
<circle cx="810.3" cy="1010.6" r="3.2" fill="none" stroke="#3aa692" stroke-width="1.3" />
<path d="M803.9 1016.2H816.8a6.45 5.6 0 0 1-12.9 0Z" fill="none" stroke="#3aa692" stroke-width="1.3" stroke-linecap="round" stroke-linejoin="round"/>
<path d="M1452 1007.2V1019.4M1447.2 1014.8L1452 1019.6L1456.8 1014.8" fill="none" stroke="#3aa692" stroke-width="1.3" stroke-linecap="round" stroke-linejoin="round"/>
<path d="M1446.6 1022.2H1457.4" fill="none" stroke="#3aa692" stroke-width="1.3" />
<path d="M1549.5 1008.2H1547.3V1012M1556.5 1008.2H1559V1012M1547.3 1017V1021H1549.5M1559 1017V1021H1556.5" fill="none" stroke="#2b88d8" stroke-width="1.1" />
<path d="M1546.2 1009.4L1547.3 1007L1548.4 1009.4M1557.6 1019.8L1560.2 1021L1557.6 1022.2" fill="none" stroke="#2b88d8" stroke-width="1" />
<circle cx="1553.1" cy="1014.6" r="3.4000000000000004" fill="none" stroke="#2b88d8" stroke-width="2.8" stroke-dasharray="1.54 1.13" transform="rotate(-11 1553.1 1014.6)"/>
<circle cx="1553.1" cy="1014.6" r="2.6" fill="#2b88d8" />
<circle cx="1553.1" cy="1014.6" r="1.3" fill="#ffffff" />
<circle cx="1553.1" cy="1014.6" r="2.3" fill="#fafafa" />
<circle cx="1553.1" cy="1014.6" r="1.6" fill="none" stroke="#2b88d8" stroke-width="0.9" />
<path d="M1644.8 1011.2a6.6 2.4 0 0 1 13.2 0a6.6 2.4 0 0 1-13.2 0V1014.2a6.6 2.4 0 0 0 6 2.4" fill="none" stroke="#e8485c" stroke-width="1.2" />
<circle cx="1655.8" cy="1018.2" r="4.3" fill="#e8485c" stroke="#fafafa" stroke-width="1.2" paint-order="stroke"/>
<path d="M1653.8 1018.3L1655.2 1019.7L1657.9 1016.7" fill="none" stroke="#ffffff" stroke-width="1" stroke-linecap="round" stroke-linejoin="round"/>
<rect x="1749.5" y="1008.6" width="5.6" height="5.6" rx="0" fill="#0b6fd8" />
<rect x="1755.9" y="1008.6" width="5.6" height="5.6" rx="0" fill="#0b6fd8" />
<rect x="1749.5" y="1015" width="5.6" height="5.6" rx="0" fill="#0b6fd8" />
<rect x="1755.9" y="1015" width="5.6" height="5.6" rx="0" fill="#0b6fd8" />
<path d="M1794.4 1013.8L1797.6 1017L1800.8 1013.8" fill="none" stroke="#5a5a5a" stroke-width="1.3" stroke-linecap="round" stroke-linejoin="round"/>
<rect x="1816.3" y="1010.8" width="5.3" height="8.2" rx="0.4" fill="#3daa5c" />
<rect x="1821.6" y="1010.8" width="5.4" height="8.2" rx="0" fill="#ffffff" />
<rect x="1827" y="1010.8" width="5.2" height="8.2" rx="0.4" fill="#d8383e" />
</svg>
<span class="t" style="left:85.00px;top:15.59px;font-size:12px;line-height:12px;font-weight:700;color:#ffffff;-webkit-text-stroke:0;transform:scaleX(0.8615)">Software Alarms - BusinessLog ::: 2.25.1.25 ::: Lab Enterprise EN</span>
<span class="t" style="left:765.20px;top:16.04px;font-size:12px;line-height:12px;font-weight:700;color:#2a7fd4;-webkit-text-stroke:0;transform:scaleX(0.8364)">Search</span>
<span class="t" style="left:89.02px;top:62.30px;font-size:15px;line-height:15px;font-weight:400;color:#3a3a3a;transform:scaleX(0.9785)">Main</span>
<span class="t" style="left:181.18px;top:62.30px;font-size:15px;line-height:15px;font-weight:700;color:#1f1f1f;-webkit-text-stroke:0;transform:scaleX(0.8168)">Lists</span>
<span class="t" style="left:272.00px;top:62.30px;font-size:15px;line-height:15px;font-weight:400;color:#3a3a3a;transform:scaleX(0.8981)">Tools</span>
<span class="t" style="left:32.50px;top:153.74px;font-size:12px;line-height:12px;font-weight:400;color:#2f2f2f;transform:scaleX(0.9346)">Machines</span>
<span class="t" style="left:48.00px;top:166.24px;font-size:12px;line-height:12px;font-weight:400;color:#2f2f2f;transform:scaleX(0.8790)">List</span>
<span class="t" style="left:96.00px;top:153.74px;font-size:12px;line-height:12px;font-weight:400;color:#2f2f2f;transform:scaleX(0.9647)">Software</span>
<span class="t" style="left:94.01px;top:166.24px;font-size:12px;line-height:12px;font-weight:400;color:#2f2f2f;transform:scaleX(0.9926)">Inventory</span>
<span class="t" style="left:157.00px;top:153.74px;font-size:12px;line-height:12px;font-weight:400;color:#2f2f2f;transform:scaleX(0.9361)">Hardware</span>
<span class="t" style="left:157.02px;top:166.24px;font-size:12px;line-height:12px;font-weight:400;color:#2f2f2f;transform:scaleX(0.9822)">Inventory</span>
<span class="t" style="left:237.50px;top:153.74px;font-size:12px;line-height:12px;font-weight:400;color:#2f2f2f;transform:scaleX(0.9205)">Energy</span>
<span class="t" style="left:221.00px;top:166.24px;font-size:12px;line-height:12px;font-weight:400;color:#2f2f2f;transform:scaleX(0.9853)">Consumption</span>
<span class="t" style="left:309.00px;top:153.74px;font-size:12px;line-height:12px;font-weight:400;color:#2f2f2f;transform:scaleX(0.8373)">System</span>
<span class="t" style="left:304.50px;top:166.24px;font-size:12px;line-height:12px;font-weight:400;color:#2f2f2f;transform:scaleX(0.9509)">Updates</span>
<span class="t" style="left:359.96px;top:153.74px;font-size:12px;line-height:12px;font-weight:400;color:#2f2f2f;transform:scaleX(1.0428)">Internal</span>
<span class="t" style="left:364.50px;top:166.24px;font-size:12px;line-height:12px;font-weight:400;color:#2f2f2f;transform:scaleX(0.8859)">Events</span>
<span class="t" style="left:418.00px;top:153.74px;font-size:12px;line-height:12px;font-weight:400;color:#2f2f2f;transform:scaleX(0.9336)">Export</span>
<span class="t" style="left:415.00px;top:166.24px;font-size:12px;line-height:12px;font-weight:400;color:#2f2f2f;transform:scaleX(0.9134)">Log List</span>
<span class="t" style="left:467.70px;top:153.74px;font-size:12px;line-height:12px;font-weight:400;color:#2f2f2f;transform:scaleX(0.9073)">Archive</span>
<span class="t" style="left:468.80px;top:166.24px;font-size:12px;line-height:12px;font-weight:400;color:#2f2f2f;transform:scaleX(0.9516)">Viewer</span>
<span class="t" style="left:535.50px;top:153.74px;font-size:12px;line-height:12px;font-weight:400;color:#2f2f2f;transform:scaleX(0.9355)">Send PowerShell</span>
<span class="t" style="left:552.50px;top:166.24px;font-size:12px;line-height:12px;font-weight:400;color:#2f2f2f;transform:scaleX(0.9418)">Command</span>
<span class="t" style="left:644.00px;top:153.74px;font-size:12px;line-height:12px;font-weight:400;color:#2f2f2f;transform:scaleX(0.8632)">Sent PS</span>
<span class="t" style="left:635.50px;top:166.24px;font-size:12px;line-height:12px;font-weight:400;color:#2f2f2f;transform:scaleX(0.9209)">Commands</span>
<span class="t" style="left:706.00px;top:153.74px;font-size:12px;line-height:12px;font-weight:400;color:#2f2f2f;transform:scaleX(0.8958)">List of PS</span>
<span class="t" style="left:706.00px;top:166.24px;font-size:12px;line-height:12px;font-weight:400;color:#2f2f2f;transform:scaleX(0.9486)">Template</span>
<span class="t" style="left:783.50px;top:153.74px;font-size:12px;line-height:12px;font-weight:400;color:#2f2f2f;transform:scaleX(0.8403)">Access</span>
<span class="t" style="left:790.50px;top:166.24px;font-size:12px;line-height:12px;font-weight:400;color:#2f2f2f;transform:scaleX(1.0079)">Log</span>
<span class="t" style="left:830.50px;top:153.74px;font-size:12px;line-height:12px;font-weight:400;color:#2f2f2f;transform:scaleX(0.8786)">Log Access</span>
<span class="t" style="left:847.00px;top:166.24px;font-size:12px;line-height:12px;font-weight:400;color:#2f2f2f;transform:scaleX(0.8683)">Files</span>
<span class="t" style="left:900.00px;top:153.74px;font-size:12px;line-height:12px;font-weight:400;color:#2f2f2f;transform:scaleX(0.8098)">USB Access</span>
<span class="t" style="left:918.50px;top:166.24px;font-size:12px;line-height:12px;font-weight:400;color:#2f2f2f;transform:scaleX(0.8532)">List</span>
<span class="t" style="left:969.00px;top:153.74px;font-size:12px;line-height:12px;font-weight:400;color:#2f2f2f;transform:scaleX(0.9635)">Log Audit</span>
<span class="t" style="left:969.00px;top:166.24px;font-size:12px;line-height:12px;font-weight:400;color:#2f2f2f;transform:scaleX(0.8835)">Sql Server</span>
<span class="t" style="left:1033.00px;top:153.74px;font-size:12px;line-height:12px;font-weight:400;color:#2f2f2f;transform:scaleX(0.8651)">Process</span>
<span class="t" style="left:1042.00px;top:166.24px;font-size:12px;line-height:12px;font-weight:400;color:#2f2f2f;transform:scaleX(0.9562)">Log</span>
<span class="t" style="left:1088.50px;top:153.74px;font-size:12px;line-height:12px;font-weight:400;color:#2f2f2f;transform:scaleX(0.9669)">Print</span>
<span class="t" style="left:1088.50px;top:166.24px;font-size:12px;line-height:12px;font-weight:400;color:#2f2f2f;transform:scaleX(0.9415)">Logs</span>
<span class="t" style="left:1145.50px;top:153.74px;font-size:12px;line-height:12px;font-weight:400;color:#2f2f2f;transform:scaleX(0.9078)">Fails</span>
<span class="t" style="left:1130.50px;top:166.24px;font-size:12px;line-height:12px;font-weight:400;color:#2f2f2f;transform:scaleX(0.8639)">Access List</span>
<span class="t" style="left:1207.00px;top:153.74px;font-size:12px;line-height:12px;font-weight:400;color:#2f2f2f;transform:scaleX(0.9337)">Syslog</span>
<span class="t" style="left:1197.00px;top:166.24px;font-size:12px;line-height:12px;font-weight:400;color:#2f2f2f;transform:scaleX(0.8639)">Access List</span>
<span class="t" style="left:1264.00px;top:153.74px;font-size:12px;line-height:12px;font-weight:400;color:#2f2f2f;transform:scaleX(0.9780)">Antivirus</span>
<span class="t" style="left:1277.00px;top:166.24px;font-size:12px;line-height:12px;font-weight:400;color:#2f2f2f;transform:scaleX(0.9820)">Log</span>
<span class="t" style="left:1340.00px;top:153.74px;font-size:12px;line-height:12px;font-weight:400;color:#2f2f2f;transform:scaleX(0.9069)">Users/Device</span>
<span class="t" style="left:1360.00px;top:166.24px;font-size:12px;line-height:12px;font-weight:400;color:#2f2f2f;transform:scaleX(0.9569)">View</span>
<span class="t" style="left:1426.50px;top:153.74px;font-size:12px;line-height:12px;font-weight:400;color:#2f2f2f;transform:scaleX(0.9100)">Local</span>
<span class="t" style="left:1419.00px;top:166.24px;font-size:12px;line-height:12px;font-weight:400;color:#2f2f2f;transform:scaleX(0.8748)">User List</span>
<span class="t" style="left:1475.00px;top:153.74px;font-size:12px;line-height:12px;font-weight:400;color:#2f2f2f;transform:scaleX(0.9037)">Sessions</span>
<span class="t" style="left:1488.50px;top:166.24px;font-size:12px;line-height:12px;font-weight:400;color:#2f2f2f;transform:scaleX(0.8532)">List</span>
<span class="t" style="left:1533.50px;top:153.74px;font-size:12px;line-height:12px;font-weight:400;color:#2f2f2f;transform:scaleX(0.8679)">Shares</span>
<span class="t" style="left:1541.50px;top:166.24px;font-size:12px;line-height:12px;font-weight:400;color:#2f2f2f;transform:scaleX(0.8532)">List</span>
<span class="t" style="left:1581.50px;top:153.74px;font-size:12px;line-height:12px;font-weight:400;color:#2f2f2f;transform:scaleX(0.8868)">User Times</span>
<span class="t" style="left:248.00px;top:194.14px;font-size:12px;line-height:12px;font-weight:400;color:#9a9a9a;transform:scaleX(0.9657)">Actions</span>
<span class="t" style="left:615.50px;top:194.14px;font-size:12px;line-height:12px;font-weight:400;color:#9a9a9a;transform:scaleX(0.9412)">PowerShell</span>
<span class="t" style="left:1014.00px;top:194.14px;font-size:12px;line-height:12px;font-weight:400;color:#9a9a9a;transform:scaleX(0.9226)">Log Archives</span>
<span class="t" style="left:1472.00px;top:194.14px;font-size:12px;line-height:12px;font-weight:400;color:#9a9a9a;transform:scaleX(0.9436)">Views</span>
<span class="t" style="left:792.50px;top:97.19px;font-size:11px;line-height:11px;font-weight:700;color:#ffffff;-webkit-text-stroke:0;transform:scaleX(0.9597)">835</span>
<span class="t" style="left:1046.00px;top:97.19px;font-size:11px;line-height:11px;font-weight:700;color:#ffffff;-webkit-text-stroke:0;transform:scaleX(0.9148)">74</span>
<span class="t" style="left:1155.00px;top:97.19px;font-size:11px;line-height:11px;font-weight:700;color:#ffffff;-webkit-text-stroke:0;transform:scaleX(0.6667)">1</span>
<span class="t" style="left:1218.00px;top:97.19px;font-size:11px;line-height:11px;font-weight:700;color:#ffffff;-webkit-text-stroke:0;transform:scaleX(0.9903)">19</span>
<span class="t" style="left:1278.00px;top:97.19px;font-size:11px;line-height:11px;font-weight:700;color:#ffffff;-webkit-text-stroke:0;transform:scaleX(1.0419)">443</span>
<span class="t" style="left:24.00px;top:221.84px;font-size:12px;line-height:12px;font-weight:400;color:#1c7fd6;transform:scaleX(0.9259)">Software Alarms</span>
<span class="t" style="left:73.00px;top:263.34px;font-size:12px;line-height:12px;font-weight:400;color:#2f2f2f;transform:scaleX(0.9353)">Close</span>
<span class="t" style="left:154.00px;top:263.34px;font-size:12px;line-height:12px;font-weight:400;color:#2f2f2f;transform:scaleX(1.0398)">Add</span>
<span class="t" style="left:227.50px;top:263.34px;font-size:12px;line-height:12px;font-weight:400;color:#2f2f2f;transform:scaleX(0.8491)">Save</span>
<span class="t" style="left:303.00px;top:263.34px;font-size:12px;line-height:12px;font-weight:400;color:#2f2f2f;transform:scaleX(0.9785)">Clone</span>
<span class="t" style="left:386.00px;top:263.34px;font-size:12px;line-height:12px;font-weight:400;color:#2f2f2f;transform:scaleX(0.9425)">Delete</span>
<span class="t" style="left:472.40px;top:263.34px;font-size:12px;line-height:12px;font-weight:400;color:#2f2f2f;transform:scaleX(0.9647)">Export</span>
<span class="t" style="left:572.50px;top:263.34px;font-size:12px;line-height:12px;font-weight:400;color:#2f2f2f;transform:scaleX(0.9191)">Refresh</span>
<span class="t" style="left:662.01px;top:263.34px;font-size:12px;line-height:12px;font-weight:400;color:#2f2f2f;transform:scaleX(0.9868)">IA Powershell</span>
<span class="t" style="left:786.00px;top:263.34px;font-size:12px;line-height:12px;font-weight:400;color:#2f2f2f;transform:scaleX(0.9665)">Analysis of the alarms present</span>
<span class="t" style="left:59.00px;top:310.20px;font-size:13px;line-height:13px;font-weight:400;color:#2f2f2f;transform:scaleX(0.9563)">Activate</span>
<span class="t" style="left:173.47px;top:310.20px;font-size:13px;line-height:13px;font-weight:400;color:#2f2f2f;transform:scaleX(1.0346)">Description</span>
<span class="t" style="left:694.50px;top:310.20px;font-size:13px;line-height:13px;font-weight:400;color:#2f2f2f;transform:scaleX(1.0019)">Machine</span>
<span class="t" style="left:904.45px;top:310.20px;font-size:13px;line-height:13px;font-weight:400;color:#2f2f2f;transform:scaleX(1.0517)">Program</span>
<span class="t" style="left:1204.00px;top:310.20px;font-size:13px;line-height:13px;font-weight:400;color:#2f2f2f;transform:scaleX(1.0202)">Version</span>
<span class="t" style="left:1417.00px;top:310.20px;font-size:13px;line-height:13px;font-weight:400;color:#2f2f2f;transform:scaleX(0.9960)">Installed</span>
<span class="t" style="left:1516.70px;top:310.20px;font-size:13px;line-height:13px;font-weight:400;color:#2f2f2f;transform:scaleX(1.0486)">Updated</span>
<span class="t" style="left:1616.75px;top:310.20px;font-size:13px;line-height:13px;font-weight:400;color:#2f2f2f;transform:scaleX(0.9987)">Uninstalled</span>
<span class="t" style="left:1733.04px;top:310.20px;font-size:13px;line-height:13px;font-weight:400;color:#2f2f2f;transform:scaleX(0.9635)">PowerShell</span>
<span class="t" style="left:1833.00px;top:310.20px;font-size:13px;line-height:13px;font-weight:400;color:#2f2f2f;transform:scaleX(0.9952)">Additional...</span>
<span class="t" style="left:154.51px;top:347.00px;font-size:13px;line-height:13px;font-weight:400;color:#2f2f2f;transform:scaleX(0.9940)">Uninstall OneDrive</span>
<span class="t" style="left:154.52px;top:383.46px;font-size:16px;line-height:16px;font-weight:400;color:#2f2f2f;transform:scaleX(0.9789)">Install Teamviewer</span>
<span class="t" style="left:154.50px;top:421.00px;font-size:13px;line-height:13px;font-weight:400;color:#2f2f2f;transform:scaleX(1.0046)">Install Supremo</span>
<span class="t" style="left:154.53px;top:458.00px;font-size:13px;line-height:13px;font-weight:400;color:#2f2f2f;transform:scaleX(0.9736)">Unistall Businesslog RT</span>
<span class="t" style="left:154.52px;top:495.00px;font-size:13px;line-height:13px;font-weight:400;color:#2f2f2f;transform:scaleX(0.9820)">Install FortiClient VPN</span>
<span class="t" style="left:675.08px;top:347.00px;font-size:13px;line-height:13px;font-weight:400;color:#2f2f2f;transform:scaleX(0.9246)">BLOG-DC01</span>
<span class="t" style="left:676.00px;top:384.46px;font-size:16px;line-height:16px;font-weight:400;color:#2f2f2f;transform:scaleX(1.0833)">*</span>
<span class="t" style="left:676.00px;top:423.00px;font-size:13px;line-height:13px;font-weight:400;color:#2f2f2f;transform:scaleX(1.0000)">*</span>
<span class="t" style="left:676.00px;top:460.00px;font-size:13px;line-height:13px;font-weight:400;color:#2f2f2f;transform:scaleX(1.0000)">*</span>
<span class="t" style="left:676.00px;top:497.00px;font-size:13px;line-height:13px;font-weight:400;color:#2f2f2f;transform:scaleX(1.0000)">*</span>
<span class="t" style="left:885.72px;top:347.00px;font-size:13px;line-height:13px;font-weight:400;color:#2f2f2f;transform:scaleX(1.0271)">Microsoft OneDrive</span>
<span class="t" style="left:886.75px;top:383.46px;font-size:16px;line-height:16px;font-weight:400;color:#2f2f2f;transform:scaleX(0.9648)">Teamviewer</span>
<span class="t" style="left:886.75px;top:421.00px;font-size:13px;line-height:13px;font-weight:400;color:#2f2f2f;transform:scaleX(0.9901)">Supremo</span>
<span class="t" style="left:885.81px;top:458.00px;font-size:13px;line-height:13px;font-weight:400;color:#2f2f2f;transform:scaleX(0.9383)">BusinessLogRT</span>
<span class="t" style="left:885.78px;top:495.00px;font-size:13px;line-height:13px;font-weight:400;color:#2f2f2f;transform:scaleX(0.9725)">FortiClientVPN</span>
<span class="t" style="left:55.00px;top:960.59px;font-size:12px;line-height:12px;font-weight:400;color:#2f2f2f;transform:scaleX(0.9826)">For fields Version or Machine you can set * in the to search for all the possibilities</span>
<span class="t" style="left:494.75px;top:960.59px;font-size:12px;line-height:12px;font-weight:400;color:#2f2f2f;transform:scaleX(0.9756)">For the [PROGRAM] field, you can select [Partial Search] to perform a partial search, set * in the other fields to search for all possibilities.</span>
<span class="t" style="left:31.00px;top:1008.59px;font-size:12px;line-height:12px;font-weight:400;color:#2f2f2f;transform:scaleX(0.9238)">Version : 2.25.1.25</span>
<span class="t" style="left:158.75px;top:1008.59px;font-size:12px;line-height:12px;font-weight:400;color:#2f2f2f;transform:scaleX(0.8412)">License : BUSINESS</span>
<span class="t" style="left:288.75px;top:1008.59px;font-size:12px;line-height:12px;font-weight:400;color:#2f2f2f;transform:scaleX(0.9324)">Nodes: 11 / 80</span>
<span class="t" style="left:396.75px;top:1008.59px;font-size:12px;line-height:12px;font-weight:400;color:#2f2f2f;transform:scaleX(0.9364)">Expiration: 16/07/2069</span>
<span class="t" style="left:544.00px;top:1008.59px;font-size:12px;line-height:12px;font-weight:400;color:#2f2f2f;transform:scaleX(0.9263)">DB Working: (1.4.2.9): 22,37 Mb</span>
<span class="t" style="left:739.00px;top:1008.59px;font-size:12px;line-height:12px;font-weight:400;color:#2f2f2f;transform:scaleX(0.8900)">C:\ 93 Gb</span>
<span class="t" style="left:823.75px;top:1008.59px;font-size:12px;line-height:12px;font-weight:400;color:#2f2f2f;transform:scaleX(0.9634)">User : blog</span>
<span class="t" style="left:1465.00px;top:1008.59px;font-size:12px;line-height:12px;font-weight:700;color:#2f2f2f;-webkit-text-stroke:0;transform:scaleX(0.8720)">On Arrives: 0</span>
<span class="t" style="left:1566.00px;top:1008.59px;font-size:12px;line-height:12px;font-weight:700;color:#2f2f2f;-webkit-text-stroke:0;transform:scaleX(0.8895)">On Queue: 0</span>
<span class="t" style="left:1664.75px;top:1008.59px;font-size:12px;line-height:12px;font-weight:700;color:#2f2f2f;-webkit-text-stroke:0;transform:scaleX(0.8485)">On Process: 0</span>
<span class="t" style="left:1769.00px;top:1008.59px;font-size:12px;line-height:12px;font-weight:400;color:#2f2f2f;transform:scaleX(0.9263)">Skin</span>
<span class="t" style="left:1837.75px;top:1008.59px;font-size:12px;line-height:12px;font-weight:400;color:#2f2f2f;transform:scaleX(0.9591)">Made in Italy</span>
</div>
</body></html>
